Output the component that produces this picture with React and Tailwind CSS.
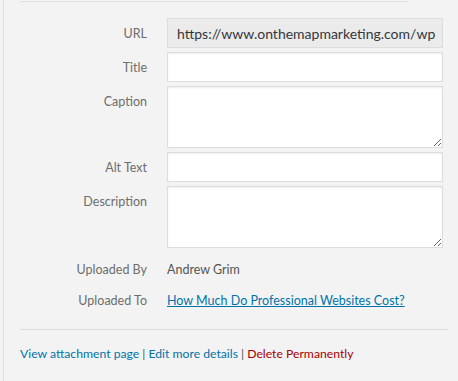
export default function App() {
  const labelCls = "w-[147px] shrink-0 text-right text-[12.5px] text-[#6d6d6d] h-[30px] leading-[32px]";
  const inputCls = "w-[276px] h-[30px] border border-[#ddd] bg-white shadow-[inset_0_1px_2px_rgba(0,0,0,0.07)] outline-none";
  const areaCls = "w-[276px] h-[62px] border border-[#ddd] bg-white shadow-[inset_0_1px_2px_rgba(0,0,0,0.07)] outline-none resize-y block";

  return (
    <div className="w-[458px] h-[381px] bg-[#f3f3f3] pl-[3px] overflow-hidden font-['Lato',sans-serif]">
      <div className="h-full border-l border-[#e0e0e0]">
        <div className="ml-[16px] w-[388px] h-[2px] border-b border-[#ddd] bg-[#f6f6f6]" />

        <div className="flex flex-col gap-[4px] mt-[16px] -ml-[4px]">
          <div className="flex items-start gap-[20px]">
            <label className={labelCls}>URL</label>
            <div className="w-[276px] h-[30px] border border-[#ddd] bg-[#ebebeb] pl-[9px] text-[14px] leading-[29px] text-[#32373c] overflow-hidden whitespace-nowrap">
              https://www.onthemapmarketing.com/wp
            </div>
          </div>
          <div className="flex items-start gap-[20px]">
            <label className={labelCls}>Title</label>
            <input className={inputCls} />
          </div>
          <div className="flex items-start gap-[20px]">
            <label className={labelCls}>Caption</label>
            <textarea className={areaCls} />
          </div>
          <div className="flex items-start gap-[20px]">
            <label className={labelCls}>Alt Text</label>
            <input className={inputCls} />
          </div>
          <div className="flex items-start gap-[20px]">
            <label className={labelCls}>Description</label>
            <textarea className={areaCls} />
          </div>
        </div>

        <div className="flex flex-col gap-[1px] mt-[6px] -ml-[4px] text-[12.5px]">
          <div className="flex items-center gap-[20px]">
            <span className={labelCls}>Uploaded By</span>
            <span className="text-[#555] h-[30px] leading-[32px]">Andrew Grim</span>
          </div>
          <div className="flex items-center gap-[20px]">
            <span className={labelCls}>Uploaded To</span>
            <a href="#" className="text-[#0073aa] underline h-[30px] leading-[32px]">How Much Do Professional Websites Cost?</a>
          </div>
        </div>

        <div className="ml-[16px] mr-[10px] mt-[14px] border-t border-[#ddd]" />

        <div className="ml-[16px] mt-[15px] text-[12.2px] text-[#555]">
          <a href="#" className="text-[#0073aa]">View attachment page</a>
          <span> | </span>
          <a href="#" className="text-[#0073aa]">Edit more details</a>
          <span> | </span>
          <a href="#" className="text-[#a00]">Delete Permanently</a>
        </div>
      </div>
    </div>
  );
}
